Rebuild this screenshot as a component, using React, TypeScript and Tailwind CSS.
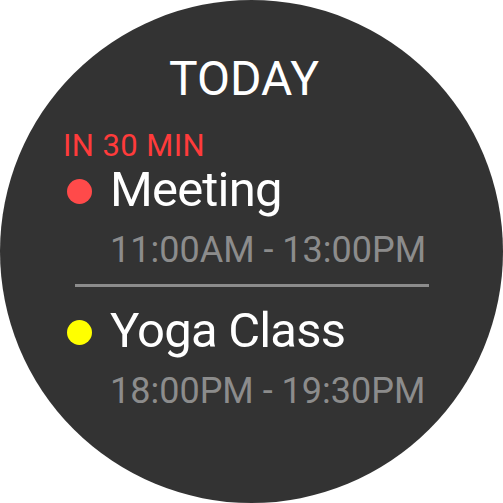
import React from "react";

function Event({ color, title, time }: { color: string; title: string; time: string }) {
  return (
    <div className="flex flex-col">
      <div className="flex items-center">
        <div className={`w-[25px] h-[25px] rounded-full ml-[4px] mt-[3px] ${color}`} />
        <div className="ml-[18px] text-[49px] leading-[50px] tracking-[-0.8px] text-white">{title}</div>
      </div>
      <div className="ml-[47px] mt-[17px] text-[36px] leading-[36px] text-[#8c8c8c]">{time}</div>
    </div>
  );
}

export default function App() {
  return (
    <div className="w-[503px] h-[503px] bg-white" style={{ fontFamily: "Roboto, 'Noto Sans', sans-serif" }}>
      <div className="w-[503px] h-[503px] rounded-full bg-[#333333] flex flex-col pt-[55px]">
        <div className="text-center pr-[15px] text-[48px] leading-[48px] text-white">TODAY</div>
        <div className="pl-[63px] mt-[28px] flex flex-col">
          <div className="text-[31px] leading-[30px] tracking-[0.4px] text-[#ff3b3b]">IN 30 MIN</div>
          <div className="mt-[4px]">
            <Event color="bg-[#ff4a4a]" title="Meeting" time="11:00AM - 13:00PM" />
          </div>
          <div className="ml-[12px] w-[354px] h-[3px] mt-[16px] bg-[#8c8c8c]" />
          <div className="mt-[19px]">
            <Event color="bg-[#ffff00]" title="Yoga Class" time="18:00PM - 19:30PM" />
          </div>
        </div>
      </div>
    </div>
  );
}
